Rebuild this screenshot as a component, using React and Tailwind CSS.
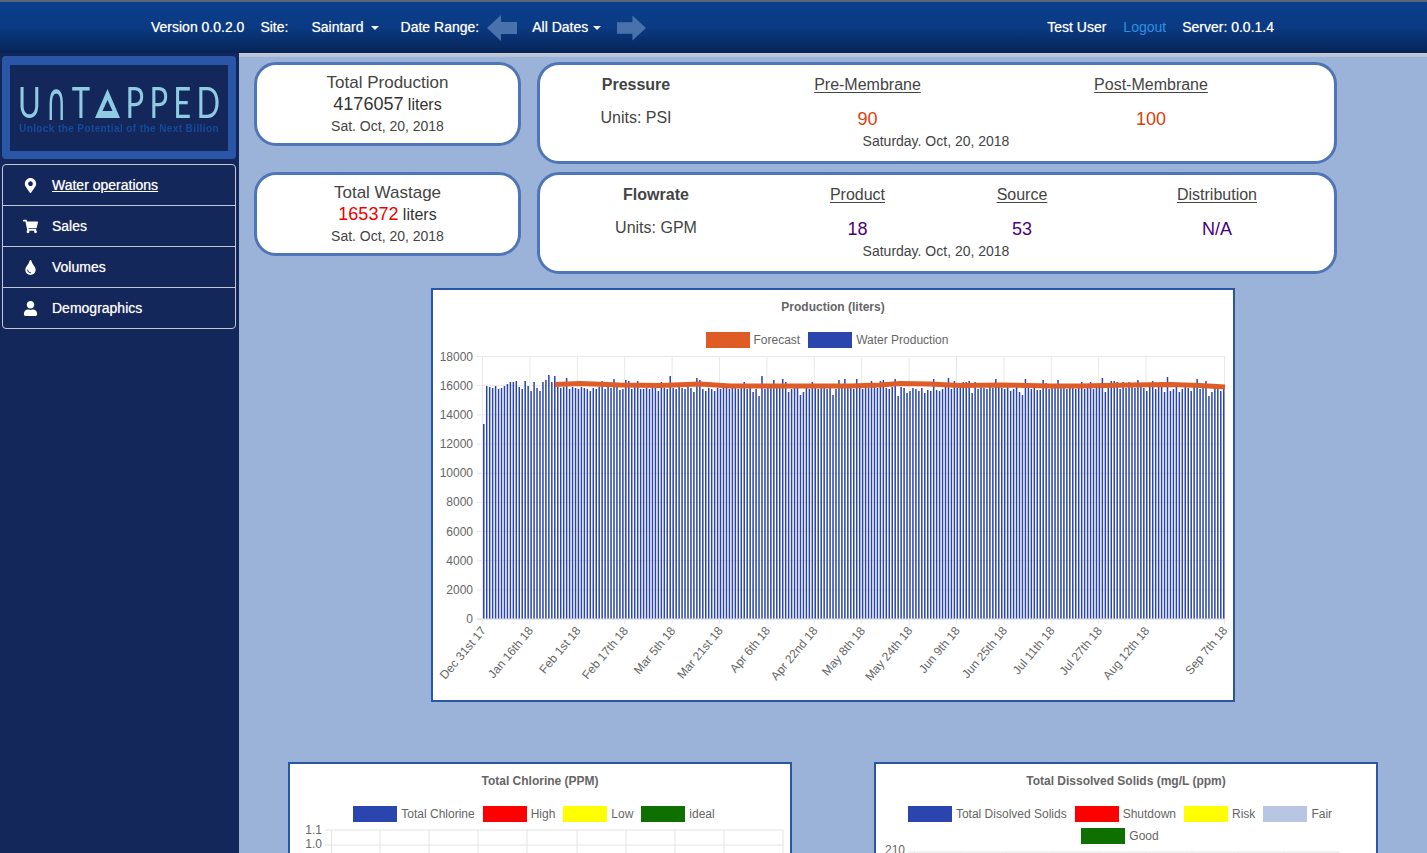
import { FaMapMarkerAlt, FaShoppingCart, FaTint, FaUser } from "react-icons/fa";

const menuItems = [
  { label: "Water operations", icon: FaMapMarkerAlt, active: true },
  { label: "Sales", icon: FaShoppingCart },
  { label: "Volumes", icon: FaTint },
  { label: "Demographics", icon: FaUser },
];

// bars whose top stands out from the rest, as [page x, page y of the top]
const barTops = [
  [486, 386], [489, 387], [492, 388], [495, 386], [498, 389], [501, 388], [504, 386], [507, 384], [510, 382],
  [513, 382], [516, 381], [519, 387], [522, 389], [525, 381], [528, 386], [531, 391], [534, 382], [537, 388],
  [540, 391], [543, 382], [546, 380], [549, 375], [552, 382], [555, 376], [558, 387], [561, 388], [566, 378],
  [590, 391], [602, 381], [614, 379], [620, 390], [626, 380], [629, 381], [638, 381], [643, 389], [658, 391],
  [661, 382], [670, 376], [693, 392], [697, 378], [700, 380], [706, 391], [715, 391], [743, 382], [753, 392],
  [759, 396], [762, 376], [771, 384], [774, 380], [777, 384], [783, 379], [786, 382], [789, 392], [801, 395],
  [804, 392], [812, 382], [833, 395], [839, 380], [845, 379], [857, 379], [872, 381], [881, 381], [884, 380],
  [895, 379], [898, 396], [907, 393], [910, 391], [919, 391], [925, 393], [928, 390], [931, 391], [934, 379],
  [937, 390], [940, 391], [949, 378], [955, 381], [961, 383], [964, 382], [969, 381], [972, 393], [975, 382],
  [996, 379], [1011, 391], [1020, 392], [1023, 395], [1026, 379], [1038, 390], [1041, 380], [1044, 383],
  [1058, 380], [1082, 382], [1091, 382], [1103, 378], [1106, 392], [1112, 381], [1115, 382], [1118, 389],
  [1121, 382], [1129, 382], [1138, 380], [1147, 391], [1153, 381], [1162, 382], [1165, 392], [1168, 377],
  [1171, 391], [1180, 392], [1189, 391], [1195, 379], [1204, 381], [1207, 396], [1212, 392], [1221, 391],
];

const bars = Array.from({ length: 251 }, (_, i) => {
  const x = 483 + i * 2.96;
  const hit = barTops.find((b) => Math.abs(b[0] - x) < 1.5);
  if (i === 0) return { x, top: 424 };
  return { x, top: hit ? hit[1] : 387 + (i * 7) % 3 };
});

const forecastLine =
  "555,384.5 580,383.5 620,385 660,385.5 700,384 730,386 760,386 800,386 850,386 880,385 900,383.5 930,384 960,385.5 1000,385 1050,386 1080,386 1130,385 1170,384.5 1200,385.5 1225,387";

const yLabels = [18000, 16000, 14000, 12000, 10000, 8000, 6000, 4000, 2000, 0];

const xLabels = [
  "Dec 31st 17", "Jan 16th 18", "Feb 1st 18", "Feb 17th 18", "Mar 5th 18", "Mar 21st 18", "Apr 6th 18", "Apr 22nd 18",
  "May 8th 18", "May 24th 18", "Jun 9th 18", "Jun 25th 18", "Jul 11th 18", "Jul 27th 18", "Aug 12th 18",
];

function Legend({ items }) {
  return (
    <div className="flex flex-wrap justify-center gap-x-[8px] gap-y-[6px] pr-[12px] text-[12px] leading-[16px] text-[#666]">
      {items.map((item) => (
        <div key={item.label} className="flex items-center gap-[4px]">
          <span className={`h-[16px] w-[44px] ${item.color}`}></span>
          <span>{item.label}</span>
        </div>
      ))}
    </div>
  );
}

function StatCard({ title, value, valueColor, date }) {
  return (
    <div className="h-[84px] w-[267px] shrink-0 rounded-[22px] border-[3px] border-[#4f75b6] bg-white pt-[7px] text-center text-[16px] leading-[22px] text-[#333]">
      <div className="h-[21px] text-[17px] text-[#444]">{title}</div>
      <div className="h-[22px]">
        <span className={`text-[18px] ${valueColor}`}>{value}</span> liters
      </div>
      <div className="text-[14px] text-[#444]">{date}</div>
    </div>
  );
}

function ReadingCard({ title, units, columns, template, readings, color }) {
  return (
    <div className="h-[102px] w-[800px] shrink-0 rounded-[22px] border-[3px] border-[#4f75b6] bg-white pt-[8px] text-center text-[16px] leading-[24px] text-[#444]">
      <div className={`grid ${template}`}>
        <div className="font-bold">{title}</div>
        {columns.map((c) => (
          <div key={c} className="underline underline-offset-2">
            {c}
          </div>
        ))}
      </div>
      <div className={`mt-[10px] grid ${template}`}>
        <div className="-translate-y-[1px]">{units}</div>
        {readings.map((r) => (
          <div key={r.key} className={`text-[18px] ${color}`}>
            {r.value}
          </div>
        ))}
      </div>
      <div className="-mt-[1px] pr-[2px] text-[14px] leading-[22px]">Saturday. Oct, 20, 2018</div>
    </div>
  );
}

function ProductionChart() {
  return (
    <svg viewBox="433 350 800 350" className="block h-[350px] w-[800px]">
      {yLabels.map((v, i) => {
        const y = 356.5 + i * 29.17;
        return (
          <g key={v}>
            <line x1="477" x2="1225" y1={y} y2={y} stroke={v === 0 ? "#ccc" : "#e8e8e8"} />
            <text x="473" y={y + 4} textAnchor="end" fontSize="12" fill="#666">
              {v}
            </text>
          </g>
        );
      })}
      {xLabels.map((label, i) => {
        const x = 482.5 + i * 47.4;
        return (
          <g key={label}>
            <line x1={x} x2={x} y1="356" y2="624" stroke="#e8e8e8" />
            <text x={x + 4} y="631" textAnchor="end" fontSize="12" fill="#666" transform={`rotate(-50 ${x + 4} 631)`}>
              {label}
            </text>
          </g>
        );
      })}
      <line x1="1224.5" x2="1224.5" y1="356" y2="624" stroke="#e8e8e8" />
      <text x="1228" y="631" textAnchor="end" fontSize="12" fill="#666" transform="rotate(-50 1228 631)">
        Sep 7th 18
      </text>
      {bars.map((b) => (
        <rect key={b.x} x={b.x} y={b.top} width="1.5" height={618.5 - b.top} fill="#2a45ad" />
      ))}
      <polyline points={forecastLine} fill="none" stroke="#e05c26" strokeWidth="5" />
    </svg>
  );
}

function GridStub({ viewBox, width, height, xs, ys, x0, x1, labels }) {
  return (
    <svg viewBox={viewBox} width={width} height={height} className="block">
      {ys.map((y) => (
        <line key={y} x1={x0 - 6} x2={x1} y1={y} y2={y} stroke="#e4e4e4" />
      ))}
      {xs.map((x) => (
        <line key={x} x1={x} x2={x} y1={ys[0]} y2="880" stroke="#e4e4e4" />
      ))}
      {labels.map((l) => (
        <text key={l.text} x={x0 - 9} y={l.y + 4} textAnchor="end" fontSize="12" fill="#666">
          {l.text}
        </text>
      ))}
    </svg>
  );
}

export default function App() {
  return (
    <div className="flex h-screen flex-col overflow-hidden bg-[#13275a] font-['Liberation_Sans',Arial,sans-serif]">
      <nav className="flex h-[53px] shrink-0 items-center border-t-2 border-[#5b6675] bg-gradient-to-b from-[#0b3f8c] via-[#0a3a82] to-[#072559] text-[14px] text-white [text-shadow:0_0_1px_rgba(255,255,255,0.6)]">
        <span className="ml-[151px]">Version 0.0.2.0</span>
        <span className="ml-[16px]">Site:</span>
        <span className="ml-[23px] flex items-center">
          Saintard
          <span className="ml-[7px] mt-[1px] border-x-[4px] border-t-[4px] border-x-transparent border-t-white"></span>
        </span>
        <span className="ml-[22px]">Date Range:</span>
        <svg viewBox="0 0 30 26" className="ml-[8px] h-[26px] w-[30px]">
          <polygon points="0,13 14,0 14,7 30,7 30,19 14,19 14,26" fill="#4a72aa" />
        </svg>
        <span className="ml-[15px] flex items-center">
          All Dates
          <span className="ml-[5px] mt-[1px] border-x-[4px] border-t-[4px] border-x-transparent border-t-white"></span>
        </span>
        <svg viewBox="0 0 30 26" className="ml-[16px] h-[26px] w-[29px]">
          <polygon points="30,13 16,0 16,7 0,7 0,19 16,19 16,26" fill="#4a72aa" />
        </svg>
        <span className="ml-auto">Test User</span>
        <span className="ml-[17px] text-[#2f8fe0] [text-shadow:none]">Logout</span>
        <span className="ml-[16px] mr-[153px]">Server: 0.0.1.4</span>
      </nav>

      <div className="flex min-h-0 flex-1">
        <aside className="w-[239px] shrink-0 pl-[2px] pr-[3px] pt-[3px]">
          <div className="flex h-[103px] items-center rounded-[4px] bg-[#2a56a8] px-[8px] py-[8px]">
            <div className="h-[86px] w-full bg-[#13275a] px-[8px] pt-[22px] blur-[0.6px]">
              <div className="flex h-[32px] items-center justify-between font-['Lato',sans-serif] text-[31px] leading-none text-[#8fcbe3]">
                <span className="scale-y-[1.35]">U</span>
                <span className="scale-y-[1.9] font-['DejaVu_Sans',sans-serif] text-[28px]">∩</span>
                <span className="scale-y-[1.35]">T</span>
                <svg viewBox="0 0 30 30" preserveAspectRatio="none" className="h-[30px] w-[25px]">
                  <path fillRule="evenodd" d="M15 1 L30 30 L0 30 Z M15 12 L9 23 L21 23 Z" fill="#8fcbe3" />
                </svg>
                <span className="scale-y-[1.35]">P</span>
                <span className="scale-y-[1.35]">P</span>
                <span className="scale-y-[1.35]">E</span>
                <span className="scale-y-[1.35]">D</span>
              </div>
              <div className="mt-[4px] whitespace-nowrap text-center text-[10px] font-bold leading-[12px] tracking-[0.4px] text-[#164a9c]">
                Unlock the Potential of the Next Billion
              </div>
            </div>
          </div>
          <ul className="mt-[5px] rounded-[4px] border border-[#c4c8d0] text-[14px] text-white [text-shadow:0_0_1px_rgba(255,255,255,0.6)]">
            {menuItems.map((item, i) => {
              const Icon = item.icon;
              return (
                <li
                  key={item.label}
                  className={`flex items-center pl-[20px] ${i > 0 ? "h-[41px] border-t border-[#c4c8d0]" : "h-[40px]"}`}
                >
                  <span className="flex w-[14px] justify-center">
                    <Icon className="h-[15px] w-[15px] shrink-0" />
                  </span>
                  <span className={`ml-[15px] ${item.active ? "underline" : ""}`}>{item.label}</span>
                </li>
              );
            })}
          </ul>
        </aside>

        <main className="min-w-0 flex-1 bg-[#9bb3d9]">
          <div className="h-[4px] bg-gradient-to-b from-[#c9ccd2] to-[#b4c1d8]"></div>
          <div className="flex flex-col gap-[8px] pl-[15px] pt-[5px]">
            <div className="flex items-start gap-[16px]">
              <StatCard title="Total Production" value="4176057" valueColor="text-[#333]" date="Sat. Oct, 20, 2018" />
              <ReadingCard
                title="Pressure"
                units="Units: PSI"
                columns={["Pre-Membrane", "Post-Membrane"]}
                template="grid-cols-[192px_271px_296px]"
                readings={[
                  { key: "pre", value: "90" },
                  { key: "post", value: "100" },
                ]}
                color="text-[#d9400b]"
              />
            </div>
            <div className="flex items-start gap-[16px]">
              <StatCard title="Total Wastage" value="165372" valueColor="text-[#f00000]" date="Sat. Oct, 20, 2018" />
              <ReadingCard
                title="Flowrate"
                units="Units: GPM"
                columns={["Product", "Source", "Distribution"]}
                template="grid-cols-[232px_171px_158px_232px]"
                readings={[
                  { key: "product", value: "18" },
                  { key: "source", value: "53" },
                  { key: "dist", value: "N/A" },
                ]}
                color="text-[#4b0082]"
              />
            </div>
          </div>

          <section className="mx-auto mt-[14px] h-[414px] w-[804px] border-2 border-[#2a56a8] bg-white">
            <div className="pt-[9px] text-center text-[12px] font-bold leading-[16px] text-[#666]">
              Production (liters)
            </div>
            <div className="mt-[17px]">
              <Legend
                items={[
                  { label: "Forecast", color: "bg-[#e05c26]" },
                  { label: "Water Production", color: "bg-[#2a45ad]" },
                ]}
              />
            </div>
            <div className="mt-[2px]">
              <ProductionChart />
            </div>
          </section>

          <div className="mt-[60px] flex justify-center gap-[82px]">
            <section className="h-[120px] w-[504px] overflow-hidden border-2 border-[#2a56a8] bg-white">
              <div className="pt-[9px] text-center text-[12px] font-bold leading-[16px] text-[#666]">
                Total Chlorine (PPM)
              </div>
              <div className="mt-[17px]">
                <Legend
                  items={[
                    { label: "Total Chlorine", color: "bg-[#2a45ad]" },
                    { label: "High", color: "bg-[#ff0000]" },
                    { label: "Low", color: "bg-[#ffff00]" },
                    { label: "ideal", color: "bg-[#0e7000]" },
                  ]}
                />
              </div>
              <GridStub
                viewBox="290 822 500 60"
                width="500"
                height="60"
                xs={[331.5, 380, 429, 478, 527, 577, 626, 675, 724, 783]}
                ys={[830, 845]}
                x0={331}
                x1={783}
                labels={[
                  { text: "1.1", y: 830 },
                  { text: "1.0", y: 844 },
                ]}
              />
            </section>
            <section className="h-[120px] w-[504px] overflow-hidden border-2 border-[#2a56a8] bg-white">
              <div className="pt-[9px] text-center text-[12px] font-bold leading-[16px] text-[#666]">
                Total Dissolved Solids (mg/L (ppm)
              </div>
              <div className="mt-[17px] px-[30px]">
                <Legend
                  items={[
                    { label: "Total Disolved Solids", color: "bg-[#2a45ad]" },
                    { label: "Shutdown", color: "bg-[#ff0000]" },
                    { label: "Risk", color: "bg-[#ffff00]" },
                    { label: "Fair", color: "bg-[#b8c5e3]" },
                    { label: "Good", color: "bg-[#0e7000]" },
                  ]}
                />
              </div>
              <GridStub
                viewBox="876 844 500 40"
                width="500"
                height="40"
                xs={[914.5, 960.5, 1006, 1053, 1099, 1146, 1192, 1238, 1284, 1339]}
                ys={[852]}
                x0={914}
                x1={1339}
                labels={[{ text: "210", y: 850 }]}
              />
            </section>
          </div>
        </main>
      </div>
    </div>
  );
}
